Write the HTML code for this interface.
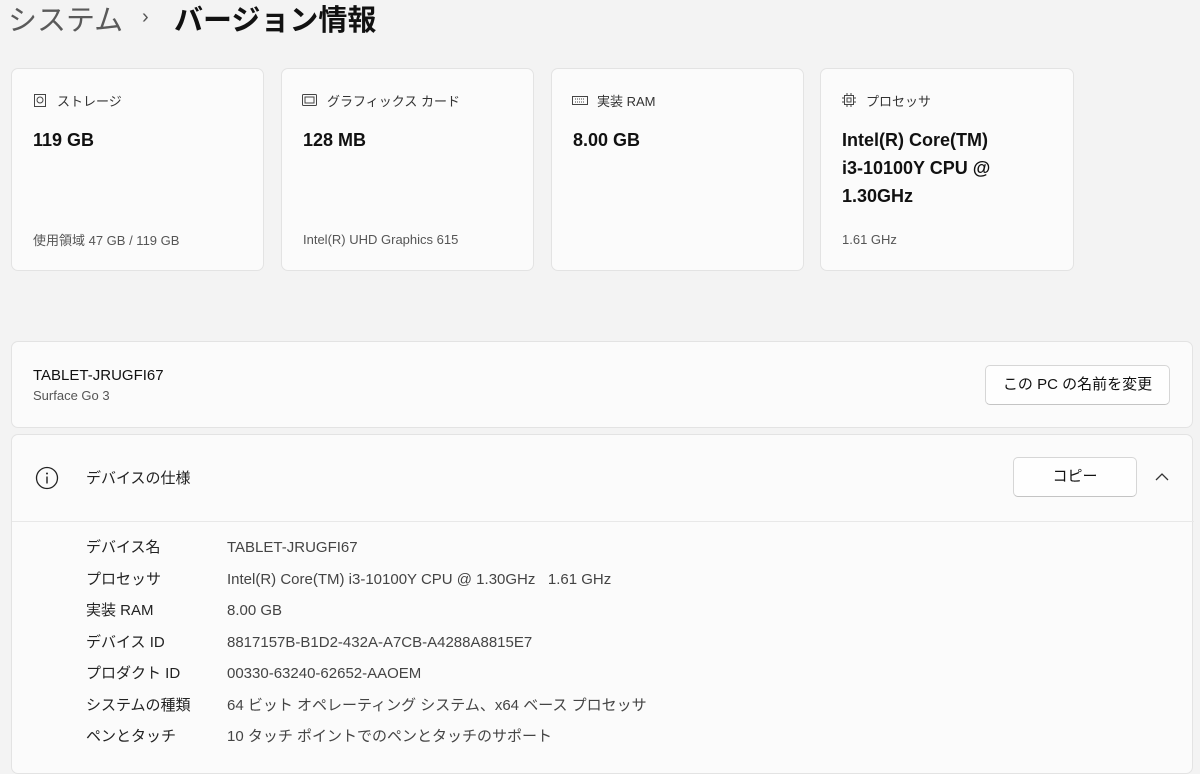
<!DOCTYPE html>
<html><head><meta charset="utf-8"><style>
*{margin:0;padding:0;box-sizing:border-box}
body{width:1200px;height:754px;overflow:hidden;background:#f3f3f3;font-family:"Liberation Sans","Noto Sans CJK JP",sans-serif;color:#1a1a1a;position:relative}
.a{position:absolute;white-space:nowrap}
.card{position:absolute;background:#fbfbfb;border:1px solid #e3e3e3;border-radius:7px}
.lab{font-size:13px;color:#333}
.big{font-size:18px;font-weight:bold;color:#111;line-height:28px}
.sub{font-size:13px;color:#555}
.k{font-size:15px;color:#222}
.v{font-size:15px;color:#444}
.btn{position:absolute;background:#fefefe;border:1px solid #d6d6d6;border-bottom-color:#c4c4c4;border-radius:5px;font-size:15px;text-align:center;color:#111}
</style></head><body>
<div class="a" style="left:8px;top:0px;font-size:29px;color:#5a5a5a;line-height:42px">システム</div>
<div class="a" style="left:142px;top:6px;font-size:20px;color:#555">›</div>
<div class="a" style="left:174px;top:0px;font-size:29px;font-weight:bold;color:#111;line-height:42px">バージョン情報</div>

<div class="card" style="left:11px;top:68px;width:253px;height:203px">
<svg class="a" style="left:22px;top:25px" width="12" height="13"><rect x="0.5" y="0.5" width="11" height="12" fill="none" stroke="#444"/><circle cx="6" cy="6" r="3" fill="none" stroke="#444"/></svg>
<div class="a lab" style="left:45px;top:22px">ストレージ</div>
<div class="a big" style="left:21px;top:57px">119 GB</div>
<div class="a sub" style="left:21px;top:161px">使用領域 47 GB / 119 GB</div></div>

<div class="card" style="left:281px;top:68px;width:253px;height:203px">
<svg class="a" style="left:20px;top:25px" width="15" height="12"><rect x="0.5" y="0.5" width="14" height="11" rx="1" fill="none" stroke="#444"/><rect x="3" y="3" width="9" height="6" fill="none" stroke="#444"/></svg>
<div class="a lab" style="left:45px;top:22px">グラフィックス カード</div>
<div class="a big" style="left:21px;top:57px">128 MB</div>
<div class="a sub" style="left:21px;top:163px">Intel(R) UHD Graphics 615</div></div>

<div class="card" style="left:551px;top:68px;width:253px;height:203px">
<svg class="a" style="left:20px;top:27px" width="16" height="9"><rect x="0.5" y="0.5" width="15" height="8" fill="none" stroke="#444"/><path d="M3 3h10M3 6h10" stroke="#444" stroke-dasharray="1 1"/></svg>
<div class="a lab" style="left:45px;top:22px">実装 RAM</div>
<div class="a big" style="left:21px;top:57px">8.00 GB</div></div>

<div class="card" style="left:820px;top:68px;width:254px;height:203px">
<svg class="a" style="left:21px;top:24px" width="14" height="14"><rect x="2.5" y="2.5" width="9" height="9" fill="none" stroke="#444"/><rect x="5" y="5" width="4" height="4" fill="none" stroke="#444"/><path d="M5 0v2M9 0v2M5 12v2M9 12v2M0 5h2M0 9h2M12 5h2M12 9h2" stroke="#444"/></svg>
<div class="a lab" style="left:45px;top:22px">プロセッサ</div>
<div class="a big" style="left:21px;top:57px;white-space:normal;width:200px">Intel(R) Core(TM)<br>i3-10100Y CPU @<br>1.30GHz</div>
<div class="a sub" style="left:21px;top:163px">1.61 GHz</div></div>

<div class="card" style="left:11px;top:341px;width:1182px;height:87px">
<div class="a" style="left:21px;top:25px;font-size:15px;color:#111">TABLET-JRUGFI67</div>
<div class="a" style="left:21px;top:46px;font-size:13px;color:#555">Surface Go 3</div>
<div class="btn" style="left:973px;top:23px;width:185px;height:40px;line-height:38px">この PC の名前を変更</div></div>

<div class="card" style="left:11px;top:434px;width:1182px;height:340px">
<svg class="a" style="left:23px;top:31px" width="24" height="24"><circle cx="12" cy="12" r="10.5" fill="none" stroke="#222" stroke-width="1.3"/><circle cx="12" cy="7.5" r="1" fill="#222"/><path d="M12 10.5v7" stroke="#222" stroke-width="1.4"/></svg>
<div class="a" style="left:74px;top:32px;font-size:15px;color:#222">デバイスの仕様</div>
<div class="btn" style="left:1001px;top:22px;width:124px;height:40px;line-height:38px">コピー</div>
<svg class="a" style="left:1143px;top:37px" width="14" height="10"><path d="M1 8l6-6 6 6" fill="none" stroke="#333" stroke-width="1.3"/></svg>
<div class="a" style="left:0;top:86px;width:1182px;height:1px;background:#e8e8e8"></div>
<div class="a k" style="left:74px;top:97px;line-height:31.5px">デバイス名<br>プロセッサ<br>実装 RAM<br>デバイス ID<br>プロダクト ID<br>システムの種類<br>ペンとタッチ</div>
<div class="a v" style="left:215px;top:97px;line-height:31.5px">TABLET-JRUGFI67<br>Intel(R) Core(TM) i3-10100Y CPU @ 1.30GHz &nbsp; 1.61 GHz<br>8.00 GB<br>8817157B-B1D2-432A-A7CB-A4288A8815E7<br>00330-63240-62652-AAOEM<br>64 ビット オペレーティング システム、x64 ベース プロセッサ<br>10 タッチ ポイントでのペンとタッチのサポート</div>
</div>
</body></html>
